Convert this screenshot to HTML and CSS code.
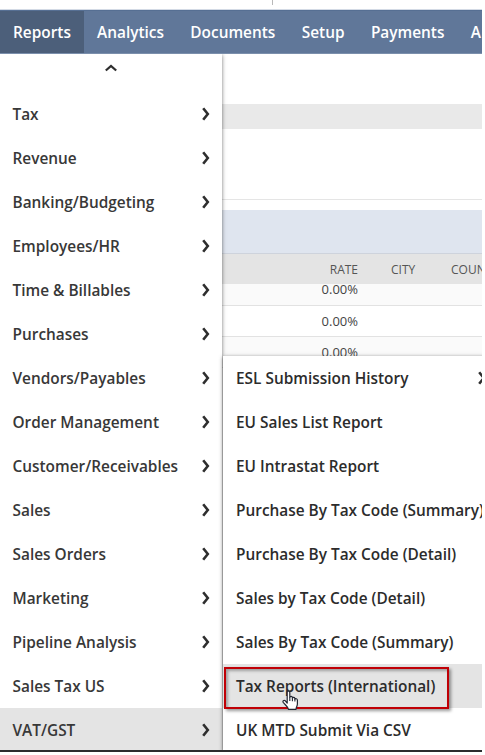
FILE: index.html
```html
<!DOCTYPE html>
<html lang="en">
<head>
<meta charset="utf-8">
<title>Reports</title>
<link rel="stylesheet" href="styles.css">
</head>
<body>
<svg class="defs" width="0" height="0"><symbol id="chev" viewBox="0 0 8 14"><path d="M1.2 1.2 L5.8 7 L1.2 12.8" fill="none" stroke="#2e2e2e" stroke-width="2.6"/></symbol></svg>
<div class="app">
  <div class="top"><i class="tick"></i></div>
  <nav class="nav">
    <a class="active">Reports</a><a>Analytics</a><a>Documents</a><a>Setup</a><a>Payments</a><a>A</a>
  </nav>
  <main class="page">
    <div class="band"></div>
    <div class="filters"></div>
    <div class="tools"></div>
    <table class="grid">
      <thead><tr><th class="rate">RATE</th><th class="city">CITY</th><th>COUNTY</th></tr></thead>
      <tbody>
        <tr class="first"><td class="rate">0.00%</td><td></td><td></td></tr>
        <tr><td class="rate">0.00%</td><td></td><td></td></tr>
        <tr><td class="rate">0.00%</td><td></td><td></td></tr>
      </tbody>
    </table>
  </main>
  <div class="menu">
    <div class="up"><svg width="12" height="8" viewBox="0 0 12 8"><path d="M0.8 6.5 L6 2 L11.2 6.5" fill="none" stroke="#2e2e2e" stroke-width="2.3"/></svg></div>
    <div class="item"><span>Tax</span><svg><use href="#chev"/></svg></div>
    <div class="item"><span>Revenue</span><svg><use href="#chev"/></svg></div>
    <div class="item"><span>Banking/Budgeting</span><svg><use href="#chev"/></svg></div>
    <div class="item"><span>Employees/HR</span><svg><use href="#chev"/></svg></div>
    <div class="item"><span>Time &amp; Billables</span><svg><use href="#chev"/></svg></div>
    <div class="item"><span>Purchases</span><svg><use href="#chev"/></svg></div>
    <div class="item"><span>Vendors/Payables</span><svg><use href="#chev"/></svg></div>
    <div class="item"><span>Order Management</span><svg><use href="#chev"/></svg></div>
    <div class="item"><span>Customer/Receivables</span><svg><use href="#chev"/></svg></div>
    <div class="item"><span>Sales</span><svg><use href="#chev"/></svg></div>
    <div class="item"><span>Sales Orders</span><svg><use href="#chev"/></svg></div>
    <div class="item"><span>Marketing</span><svg><use href="#chev"/></svg></div>
    <div class="item"><span>Pipeline Analysis</span><svg><use href="#chev"/></svg></div>
    <div class="item"><span>Sales Tax US</span><svg><use href="#chev"/></svg></div>
    <div class="item on"><span>VAT/GST</span><svg><use href="#chev"/></svg></div>
  </div>
  <div class="menu sub">
    <div class="item"><span>ESL Submission History</span><svg><use href="#chev"/></svg></div>
    <div class="item"><span>EU Sales List Report</span></div>
    <div class="item"><span>EU Intrastat Report</span></div>
    <div class="item"><span>Purchase By Tax Code (Summary)</span></div>
    <div class="item"><span>Purchase By Tax Code (Detail)</span></div>
    <div class="item"><span>Sales by Tax Code (Detail)</span></div>
    <div class="item"><span>Sales By Tax Code (Summary)</span></div>
    <div class="item on"><span>Tax Reports (International)</span></div>
    <div class="item"><span>UK MTD Submit Via CSV</span></div>
  </div>
  <div class="callout"></div>
  <svg class="hand" width="17" height="21" viewBox="0 0 17 21"><path d="M5.2 13 V2.5 C5.2 .6 7.8 .6 7.8 2.5 V7.4 C8 5.9 10.3 6 10.4 7.6 V8.2 C10.8 6.9 12.8 7.2 12.9 8.7 V9.3 C13.4 8.2 15.4 8.6 15.4 10.3 V14 C15.4 16 14.2 16.8 14 19.3 H6.4 C6.2 17 3.8 15.5 1.4 12.6 C.2 11 2 9.6 3.3 10.8 Z" fill="#fff" stroke="#222733" stroke-width="1.2" stroke-linejoin="round"/><path d="M7.8 7.4 V11 M10.4 8.2 V11.3 M12.9 9.3 V11.6" stroke="#222733" stroke-width="1.1"/></svg>
</div>
</body>
</html>
```
FILE: styles.css
```css
* { box-sizing: border-box; }
body { margin: 0; background: #fff; font-family: "Open Sans", sans-serif; overflow: hidden; }
.defs { position: absolute; }
.app { position: relative; width: 482px; height: 752px; overflow: hidden; border-bottom: 2px solid #2b2c2f; }
.top { height: 10px; border-bottom: 1px solid #d3dae5; }
.tick { display: block; width: 1px; height: 5px; margin-left: 272px; background: #b9b9b9; }
.nav { display: flex; width: 600px; height: 44px; background: #607799; border-top: 1px solid #566f93; border-bottom: 1px solid #7b8fac; }
.nav a { padding: 0 13.4px 0 13px; line-height: 43px; font-size: 15.4px; font-weight: 600; color: #fff; }
.nav .active { background: #4c5f7a; width: 84px; }
.page { width: 600px; }
.band { margin-top: 50px; height: 25px; background: #e9e9e9; }
.filters { height: 71px; border-bottom: 1px solid #e5e5e5; }
.tools { margin-top: 10px; height: 44px; background: #dfe5ef; border-bottom: 1px solid #ced3dc; }
.grid { border-collapse: separate; border-spacing: 0; table-layout: fixed; width: 600px; font-size: 12px; color: #444; }
.grid th { height: 30px; padding: 0; background: #e4e4e4; font-weight: 400; text-align: left; color: #555; }
.grid td { height: 31px; padding: 0; border-bottom: 1px solid #e2e2e2; background: #fafafa; font-size: 13px; }
.grid tr:nth-child(2) td { background: #fff; }
.grid .first td { height: 22px; padding-bottom: 10px; line-height: 11px; }
.grid .rate { width: 358px; text-align: right; }
.grid .city { width: 93px; padding-left: 33px; }
.menu { position: absolute; left: 0; top: 54px; width: 222px; height: 697px; background: #fff; box-shadow: 0 1px 4px rgba(0,0,0,.55); clip-path: inset(0 -6px 0 0); }
.up { display: flex; justify-content: center; height: 38px; padding-top: 10px; }
.item { display: flex; align-items: center; justify-content: space-between; height: 44px; padding: 0 12px 0 12.5px; font-size: 15.4px; font-weight: 600; color: #383838; white-space: nowrap; }
.item svg { width: 8px; height: 14px; flex: none; }
.item.on { background: #e4e4e4; }
.sub { left: 223px; top: 356px; width: 275px; height: 396px; clip-path: inset(-5px -5px 0 -5px); }
.sub .item { padding-left: 13px; color: #2c2c2c; }
.callout { position: absolute; left: 224px; top: 667px; width: 225px; height: 42px; border: 2px solid #c00006; box-shadow: 2px 2px 3px rgba(0,0,0,.4), inset 2px 2px 3px rgba(0,0,0,.3); }
.hand { position: absolute; left: 282px; top: 690px; }
```
